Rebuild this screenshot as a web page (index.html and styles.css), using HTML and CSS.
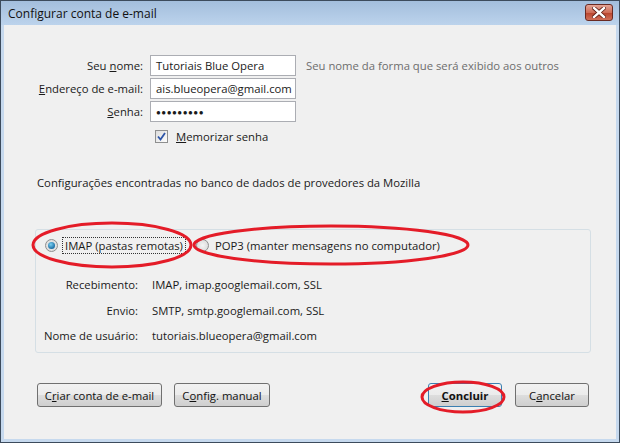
FILE: index.html
```html
<!DOCTYPE html>
<html lang="pt-BR">
<head>
  <meta charset="UTF-8">
  <title>Configurar conta de e-mail</title>
  <link rel="stylesheet" href="styles.css">
</head>
<body>
  <div class="window">
    <div class="titlebar">
      <span class="title">Configurar conta de e-mail</span>
      <span class="close-btn">
        <svg width="14" height="11" viewBox="0 0 14 11">
          <path d="M2 1 L12 10 M12 1 L2 10" stroke="#5a1a10" stroke-width="4" stroke-linecap="square"/>
          <path d="M2 1 L12 10 M12 1 L2 10" stroke="#fff" stroke-width="2.4" stroke-linecap="square"/>
        </svg>
      </span>
    </div>

    <div class="content">
      <!-- account form -->
      <div class="account-form">
        <label class="field-label">Seu <u>n</u>ome:</label>
        <div class="textbox">Tutoriais Blue Opera</div>
        <span class="hint">Seu nome da forma que será exibido aos outros</span>

        <label class="field-label"><u>E</u>ndereço de e-mail:</label>
        <div class="textbox">ais.blueopera@gmail.com</div>
        <span></span>

        <label class="field-label"><u>S</u>enha:</label>
        <div class="textbox password">●●●●●●●●●</div>
        <span></span>

        <span></span>
        <div class="remember">
          <span class="checkbox">
            <svg width="9" height="9" viewBox="0 0 9 9"><path d="M1 4.5 L3.5 7.5 L8 1" fill="none" stroke="#2d55a8" stroke-width="1.8"/></svg>
          </span>
          <span><u>M</u>emorizar senha</span>
        </div>
        <span></span>
      </div>

      <p class="found-text">Configurações encontradas no banco de dados de provedores da Mozilla</p>

      <div class="settings-box">
        <div class="protocols">
          <span class="radio checked"></span>
          <span class="radio-text focused">IMAP (pastas remotas)</span>
          <span class="radio"></span>
          <span class="radio-text">POP3 (manter mensagens no computador)</span>
        </div>
        <div class="server-info">
          <span class="info-label">Recebimento:</span>
          <span>IMAP, imap.googlemail.com, SSL</span>
          <span class="info-label">Envio:</span>
          <span>SMTP, smtp.googlemail.com, SSL</span>
          <span class="info-label">Nome de usuário:</span>
          <span>tutoriais.blueopera@gmail.com</span>
        </div>
      </div>

      <div class="button-row">
        <button class="button wide">C<u>r</u>iar conta de e-mail</button>
        <button class="button manual">C<u>o</u>nfig. manual</button>
        <span class="spacer"></span>
        <button class="button default"><u>C</u>oncluir</button>
        <button class="button cancel">C<u>a</u>ncelar</button>
      </div>
    </div>

    <!-- red annotation marks -->
    <svg class="marks" width="620" height="443" viewBox="0 0 620 443">
      <ellipse cx="112" cy="245" rx="79" ry="22" fill="none" stroke="#e41c28" stroke-width="3"/>
      <ellipse cx="331" cy="245" rx="137" ry="19" fill="none" stroke="#e41c28" stroke-width="3"/>
      <ellipse cx="463" cy="397" rx="41" ry="15" fill="none" stroke="#e41c28" stroke-width="3"/>
    </svg>
  </div>
</body>
</html>
```

FILE: styles.css
```css
body {
  margin: 0;
  font-family: "Open Sans", "Noto Sans", sans-serif;
  font-size: 11.3px;
  color: #1a1a1a;
}

.window {
  position: relative;
  width: 620px;
  height: 443px;
  box-sizing: border-box;
  border: 1px solid #3c4b5c;
  background: #c6d9ee;
  padding: 0 3px 3px 3px;
  display: flex;
  flex-direction: column;
}

.titlebar {
  height: 24px;
  display: flex;
  align-items: center;
  justify-content: space-between;
  background: linear-gradient(to bottom, #a3bedc, #bcd3ec);
  margin: 0 -3px;
  padding: 0 6px 0 7px;
}

.title {
  font-size: 12px;
  color: #111;
}

.close-btn {
  width: 28px;
  height: 17px;
  box-sizing: border-box;
  margin-top: -2px;
  border: 1px solid #6a2a22;
  border-radius: 3px;
  background: linear-gradient(to bottom, #e4a596, #cf6d58 50%, #b8432c 51%, #d0705a);
  display: flex;
  align-items: center;
  justify-content: center;
}

.content {
  flex: 1;
  background: #f0f0f0;
  padding: 30px 25px 0 31px;
  display: flex;
  flex-direction: column;
}

.account-form {
  display: grid;
  grid-template-columns: 108px 146px auto;
  column-gap: 7px;
  row-gap: 2px;
  align-items: center;
}

.field-label {
  text-align: right;
}

.textbox {
  height: 21px;
  box-sizing: border-box;
  border: 1px solid #abadb3;
  border-top-color: #e3e9ef;
  border-left-color: #e2e3ea;
  border-right-color: #dbdfe6;
  border-bottom-color: #e3e9ef;
  outline: 1px solid #abadb3;
  outline-offset: -1px;
  background: #fff;
  padding: 0 0 0 5px;
  line-height: 19px;
  white-space: nowrap;
  overflow: hidden;
}

.password {
  font-size: 8px;
  letter-spacing: 0.5px;
}

.hint {
  color: #6d6d6d;
  padding-left: 3px;
}

.remember {
  display: flex;
  align-items: center;
  gap: 8px;
  padding: 5px 0 0 5px;
}

.checkbox {
  width: 11px;
  height: 11px;
  border: 1px solid #8e8f8f;
  background: linear-gradient(135deg, #dcdcdc, #fdfdfd);
  display: flex;
  align-items: center;
  justify-content: center;
}

.found-text {
  margin: 31px 0 0 2px;
}

.settings-box {
  margin-top: 39px;
  height: 124px;
  box-sizing: border-box;
  border: 1px solid #d5dfe5;
  border-radius: 3px;
  padding: 7px 0 0 9px;
}

.protocols {
  display: flex;
  align-items: center;
  height: 16px;
}

.radio {
  width: 11px;
  height: 11px;
  border-radius: 50%;
  border: 1px solid #8e8f8f;
  background: radial-gradient(circle, #f4f4f4, #d4d4d4);
  margin-right: 4px;
  position: relative;
}

.radio.checked::after {
  content: "";
  position: absolute;
  left: 2px;
  top: 2px;
  width: 7px;
  height: 7px;
  border-radius: 50%;
  background: radial-gradient(circle at 40% 35%, #7ad0f2, #1d6fa5 70%);
}

.radio-text {
  padding: 0 2px;
  margin-right: 12px;
}

.radio-text.focused {
  border: 1px dotted #333;
  margin-right: 10px;
}

.server-info {
  display: grid;
  grid-template-columns: 102px auto;
  column-gap: 14px;
  row-gap: 10.5px;
  margin-top: 24px;
  margin-left: -9px;
  white-space: nowrap;
}

.info-label {
  text-align: right;
}

.button-row {
  display: flex;
  margin: 30px 2px 0 0;
  padding-left: 2px;
  gap: 12px;
}

.spacer {
  flex: 1;
}

.button {
  height: 24px;
  box-sizing: border-box;
  padding: 0 6px;
  border: 1px solid #707070;
  border-radius: 3px;
  background: linear-gradient(to bottom, #f2f2f2, #ebebeb 50%, #dddddd 51%, #cfcfcf);
  font-family: inherit;
  font-size: 11.3px;
  color: #111;
}

.button.wide {
  width: 125px;
}

.button.manual {
  width: 96px;
}

.button.default {
  width: 74px;
  font-weight: bold;
  border-color: #3c7fb1;
}

.button.cancel {
  width: 74px;
  margin-left: 1px;
}

.marks {
  position: absolute;
  left: -1px;
  top: -1px;
  pointer-events: none;
}
```
